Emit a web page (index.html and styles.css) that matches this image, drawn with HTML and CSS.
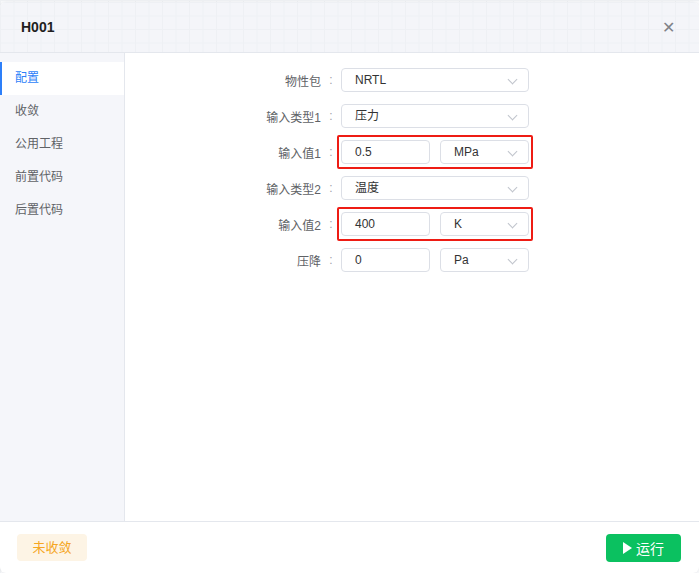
FILE: index.html
```html
<!DOCTYPE html>
<html lang="zh">
<head>
    <meta charset="UTF-8">
    <title>H001</title>
    <link rel="stylesheet" href="styles.css">
</head>
<body>
    <div class="dialog">
        <div class="dialog-header">
            <span class="title">H001</span>
            <span class="close">&#x2715;</span>
        </div>
        <div class="dialog-body">
            <ul class="side-menu">
                <li class="active">配置</li>
                <li>收敛</li>
                <li>公用工程</li>
                <li>前置代码</li>
                <li>后置代码</li>
            </ul>
            <div class="main">
                <div class="form">
                    <div class="form-row">
                        <label>物性包</label><span class="colon">:</span>
                        <div class="controls">
                            <div class="select wide">NRTL<span class="arrow"></span></div>
                        </div>
                    </div>
                    <div class="form-row">
                        <label>输入类型1</label><span class="colon">:</span>
                        <div class="controls">
                            <div class="select wide">压力<span class="arrow"></span></div>
                        </div>
                    </div>
                    <div class="form-row">
                        <label>输入值1</label><span class="colon">:</span>
                        <div class="controls marked">
                            <div class="input">0.5</div>
                            <div class="select">MPa<span class="arrow"></span></div>
                        </div>
                    </div>
                    <div class="form-row">
                        <label>输入类型2</label><span class="colon">:</span>
                        <div class="controls">
                            <div class="select wide">温度<span class="arrow"></span></div>
                        </div>
                    </div>
                    <div class="form-row">
                        <label>输入值2</label><span class="colon">:</span>
                        <div class="controls marked">
                            <div class="input">400</div>
                            <div class="select">K<span class="arrow"></span></div>
                        </div>
                    </div>
                    <div class="form-row">
                        <label>压降</label><span class="colon">:</span>
                        <div class="controls">
                            <div class="input">0</div>
                            <div class="select">Pa<span class="arrow"></span></div>
                        </div>
                    </div>
                </div>
            </div>
        </div>
        <div class="dialog-footer">
            <span class="status">未收敛</span>
            <button class="run"><span class="play"></span>运行</button>
        </div>
    </div>
</body>
</html>
```

FILE: styles.css
```css
body {
    margin: 0;
    font-family: "Liberation Sans", "Noto Sans CJK SC", sans-serif;
    font-size: 12px;
    color: #333;
    background-color: #f7f8fa;
    background-image:
        linear-gradient(#eef0f3 1px, transparent 1px),
        linear-gradient(90deg, #eef0f3 1px, transparent 1px);
    background-size: 13.5px 13.5px;
    height: 573px;
    overflow: hidden;
}
.dialog {
    margin-top: 2px;
    height: 571px;
    border-radius: 6px;
    overflow: hidden;
    background: #fff;
    display: flex;
    flex-direction: column;
    box-shadow: 0 0 2px rgba(0, 0, 0, 0.08);
}
.dialog-header {
    height: 50px;
    flex: none;
    display: flex;
    align-items: center;
    justify-content: space-between;
    padding: 0 24px 0 21px;
    border-bottom: 1px solid #e4e7ed;
    background-color: #f4f5f9;
    background-image:
        linear-gradient(#eef0f4 1px, transparent 1px),
        linear-gradient(90deg, #eef0f4 1px, transparent 1px);
    background-size: 13.5px 13.5px;
}
.title {
    font-size: 14px;
    font-weight: bold;
    color: #1f1f1f;
}
.close {
    font-size: 16px;
    color: #7f8288;
}
.dialog-body {
    flex: 1;
    display: flex;
    min-height: 0;
}
.side-menu {
    width: 124px;
    margin: 0;
    padding: 9px 0 0;
    list-style: none;
    background: #f5f6fa;
    border-right: 1px solid #e4e7ed;
}
.side-menu li {
    height: 33px;
    line-height: 33px;
    padding-left: 15px;
    color: #606266;
}
.side-menu li.active {
    background: #fff;
    color: #2d7ff9;
    box-shadow: inset 2px 0 0 #2d7ff9;
}
.main {
    flex: 1;
    padding: 15px 0 0 115px;
}
.form {
    display: flex;
    flex-direction: column;
    gap: 12px;
}
.form-row {
    display: flex;
    align-items: center;
    height: 24px;
}
.form-row label {
    width: 81px;
    text-align: right;
    color: #606266;
}
.colon {
    width: 20px;
    text-align: center;
    color: #a0a3a8;
}
.controls {
    display: flex;
    gap: 10px;
}
.controls.marked {
    border: 2px solid #ee1c14;
    border-radius: 2px;
    padding: 3px 2px;
    margin: -5px -4px;
}
.input, .select {
    box-sizing: border-box;
    width: 89px;
    height: 24px;
    line-height: 22px;
    border: 1px solid #dcdfe6;
    border-radius: 4px;
    padding-left: 13px;
    color: #333;
    background: #fff;
}
.select {
    position: relative;
}
.select.wide {
    width: 188px;
}
.arrow {
    position: absolute;
    right: 12px;
    top: 7px;
    width: 6px;
    height: 6px;
    border-right: 1px solid #c0c4cc;
    border-bottom: 1px solid #c0c4cc;
    transform: rotate(45deg);
}
.dialog-footer {
    height: 51px;
    flex: none;
    border-top: 1px solid #e4e7ed;
    display: flex;
    align-items: center;
    justify-content: space-between;
    padding: 0 18px 0 17px;
}
.status {
    width: 70px;
    height: 27px;
    line-height: 27px;
    text-align: center;
    border-radius: 4px;
    background: #fdf4e5;
    color: #f5a623;
    font-size: 13px;
}
.run {
    width: 75px;
    height: 28px;
    border: none;
    border-radius: 4px;
    background: #0bc160;
    color: #fff;
    font-family: inherit;
    font-size: 14px;
    display: flex;
    align-items: center;
    justify-content: center;
    gap: 4px;
    padding: 0;
}
.play {
    width: 0;
    height: 0;
    border-top: 6px solid transparent;
    border-bottom: 6px solid transparent;
    border-left: 9px solid #fff;
}
```
